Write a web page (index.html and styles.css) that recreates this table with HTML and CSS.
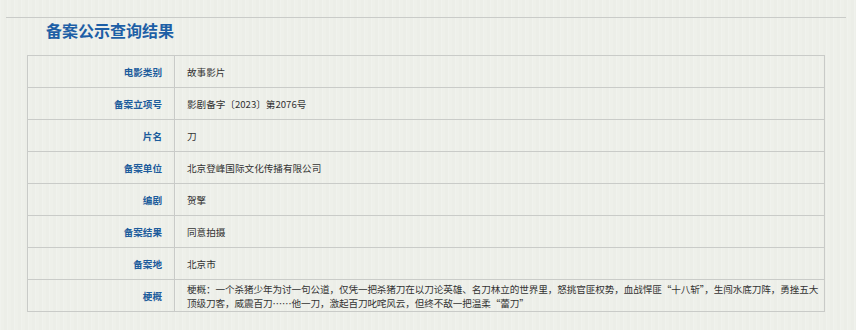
FILE: index.html
```html
<!DOCTYPE html>
<html lang="zh-CN">
<head>
    <meta charset="UTF-8">
    <meta name="viewport" content="width=device-width, initial-scale=1.0">
    <title>备案公示查询结果</title>
    <link rel="stylesheet" href="styles.css">
</head>
<body>
    <div class="page">
        <div class="head">
            <h2>备案公示查询结果</h2>
        </div>
        <table class="result">
            <tr>
                <th>电影类别</th>
                <td>故事影片</td>
            </tr>
            <tr>
                <th>备案立项号</th>
                <td>影剧备字〔2023〕第2076号</td>
            </tr>
            <tr>
                <th>片名</th>
                <td>刀</td>
            </tr>
            <tr>
                <th>备案单位</th>
                <td>北京登峰国际文化传播有限公司</td>
            </tr>
            <tr>
                <th>编剧</th>
                <td>贺擎</td>
            </tr>
            <tr>
                <th>备案结果</th>
                <td>同意拍摄</td>
            </tr>
            <tr>
                <th>备案地</th>
                <td>北京市</td>
            </tr>
            <tr>
                <th>梗概</th>
                <td class="summary">梗概：一个杀猪少年为讨一句公道，仅凭一把杀猪刀在以刀论英雄、名刀林立的世界里，怒挑官匪权势，血战悍匪“十八斩”，生闯水底刀阵，勇挫五大顶级刀客，威震百刀……他一刀，激起百刀叱咤风云，但终不敌一把温柔“蕾刀”</td>
            </tr>
        </table>
    </div>
</body>
</html>
```

FILE: styles.css
```css
body {
    margin: 0;
    font-family: "Noto Sans CJK SC", "Microsoft YaHei", sans-serif;
    background-color: #eef0ea;
    background-image: repeating-linear-gradient(90deg, rgba(255,255,255,0.12) 0, rgba(255,255,255,0.12) 1px, transparent 1px, transparent 4px, rgba(0,0,0,0.006) 4px, rgba(0,0,0,0.006) 7px);
}
.page {
    padding: 17px 10px 0 6px;
}
.head {
    border-top: 1px solid #c9cbc8;
    padding-left: 40px;
}
.head h2 {
    margin: 0;
    font-size: 16px;
    line-height: 24px;
    font-weight: bold;
    color: #1d5fa6;
}
.result {
    margin: 13px 0 0 21px;
    width: 798px;
    border-collapse: collapse;
    font-size: 9.6px;
}
.result th,
.result td {
    border: 1px solid #c9cbc8;
    height: 31px;
    padding: 0;
    vertical-align: middle;
}
.result th {
    width: 134px;
    padding-right: 12px;
    text-align: right;
    font-weight: bold;
    color: #1d5c9c;
}
.result td {
    padding-left: 12px;
    color: #333;
}
.result .summary {
    line-height: 14px;
    letter-spacing: -0.1px;
}
```
